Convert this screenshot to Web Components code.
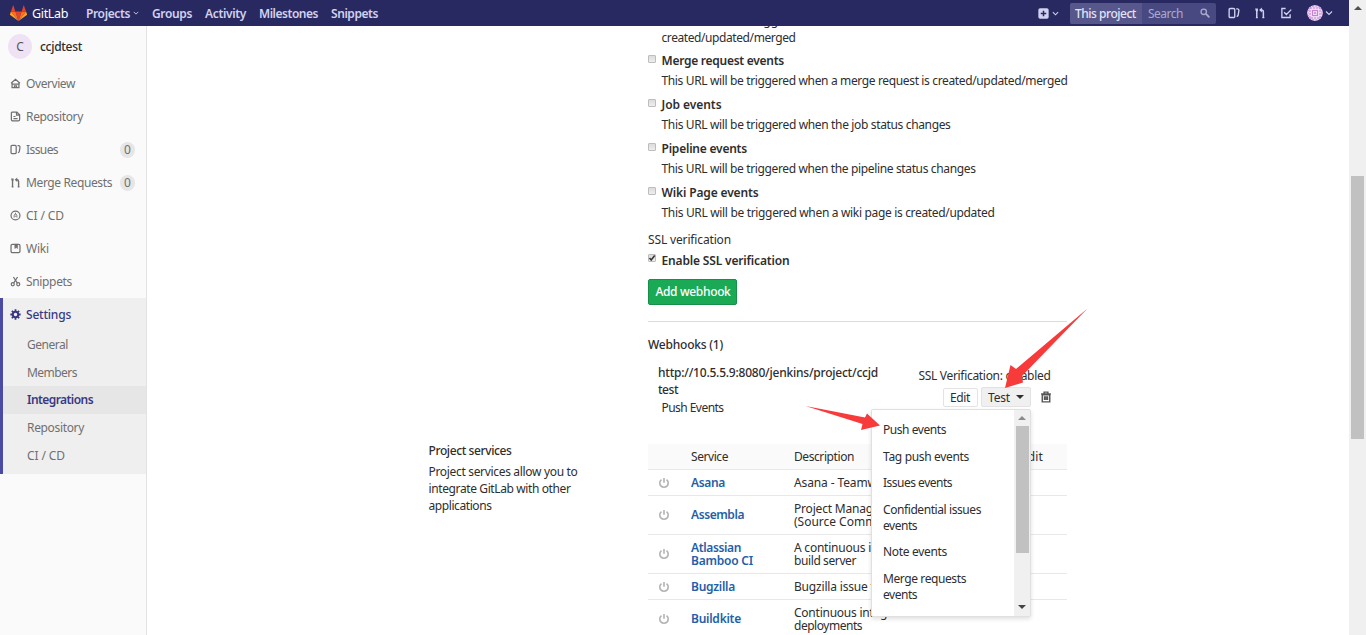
<!DOCTYPE html>
<html lang="en">
<head>
<meta charset="utf-8">
<title>Integrations · ccjdtest · GitLab</title>
<style>
html,body{margin:0;height:100%;overflow:hidden;background:#fff}
body{font:12px/17px "Noto Sans","Open Sans",sans-serif;color:#2e2e2e}
</style>
</head>
<body>
<gl-app></gl-app>
<script>
const fits=[];
function define(name,html,setup){
  customElements.define(name,class extends HTMLElement{
    constructor(){super();this.attachShadow({mode:'open'}).innerHTML=html;}
    connectedCallback(){if(setup)setup.call(this,this.shadowRoot);}
  });
}
/* Text run that is tracked to a given width */
define('fit-text',`<style>:host{display:inline-block;white-space:nowrap;vertical-align:top}</style><slot></slot>`,function(){fits.push(this)});

const ICONS={
  home:'<path d="M1.5 7.5 8 2l6.500 5.500M3 7v7h10V7M2 9h12M6.500 14v-2.500h3V14" />',
  doc:'<path d="M3 1.500h7l4 4v7a2 2 0 0 1-2 2H4a2 2 0 0 1-2-2v-10zM9.500 2v4H14M5 8h3M5 11h6"/>',
  issues:'<path d="M3 2h4.500a1.500 1.500 0 0 1 1.500 1.500v9A1.500 1.500 0 0 1 7.500 14H3a1.500 1.500 0 0 1-1.500-1.500v-9A1.500 1.500 0 0 1 3 2zM11 2.500h1.500a2 2 0 0 1 2 2.300L13.500 11a2 2 0 0 1-2 1.500"/>',
  merge:'<path d="M3.700 4v10.500M12.500 14.500V6.500a2.500 2.500 0 0 0-2.500-2.500H8.500" stroke-width="2"/><path d="M1.500 2h3.700v3.500H2.500zM10.500.8v6.400L6.800 4z" fill="currentColor" stroke="none"/><path d="M2.500 14.200h2.400M11.300 14.200h2.400"/>',
  ci:'<circle cx="8" cy="8" r="6.500"/><path d="M6 11V8a2 2 0 1 1 4 0v3M7 9h2M8 4v2" stroke-width="1.300"/>',
  wiki:'<rect x="1.500" y="2" width="13" height="12" rx="2"/><path d="M7 2v6l2-1.500L11 8V2z" fill="currentColor" stroke-width=".8"/>',
  snip:'<circle cx="4" cy="12" r="2.200"/><circle cx="12" cy="12" r="2.200"/><path d="M5 1.500 10.500 10M11 1.500 5.500 10"/>',
  gear:'<circle cx="8" cy="8" r="4" stroke-width="3"/><path d="M8 .5v3M8 12.500v3M.5 8h3M12.500 8h3M2.700 2.700l2 2M11.300 11.300l2 2M13.300 2.700l-2 2M4.700 11.300l-2 2" stroke-width="2.600"/>',
  todo:'<path d="M7.500 2H2.500v12h11V9.500M5.500 7 8.500 10 15 3.500"/>',
  search:'<circle cx="6" cy="6" r="4.300" stroke-width="2.200"/><path d="m9.500 9.500 5.500 5.500" stroke-width="3"/>',
  down:'<path d="m2 5 6 6 6-6"/>',
  plus:'<rect x=".5" y=".5" width="15" height="15" rx="2.500" fill="currentColor" stroke="none"/><path d="M8 4v8M4 8h8" stroke="#292961" stroke-width="2.200"/>',
  power:'<path d="M4.700 3.600a5.600 5.600 0 1 0 6.600 0M8 1.200V7.500"/>',
  trash:'<path d="M3 5h10v9.500H3zM1.500 4h13M5.500 4V1.500h5V4M6 7v5M8 7v5M10 7v5"/>',
  tanuki:'<g stroke="none"><path fill="#e24329" d="M8 15 10.950 6H5.050z"/><path fill="#fc6d26" d="M8 15 5.050 6H.9zM8 15l2.950-9h4.150z"/><path fill="#fca326" d="M.9 6 0 8.800c-.1.300 0 .5.200.7L8 15zM15.100 6l.9 2.800c.1.300 0 .5-.2.7L8 15z"/><path fill="#e24329" d="M.9 6h4.150L3.300.6q-.25-.5-.5 0zM15.100 6h-4.150L12.700.6q.25-.5.5 0z"/></g>'
};
define('gl-icon','<style>:host{display:inline-block;width:var(--s,12px);height:var(--s,12px);flex:none}svg{display:block;width:100%;height:100%;fill:none;stroke:currentColor;stroke-width:var(--w,1.8)}</style><svg viewBox="0 0 16 16"></svg>',function(r){r.querySelector('svg').innerHTML=ICONS[this.getAttribute('name')]});

define('gl-header',`<style>
:host{display:flex;align-items:center;height:26px;background:#292961;color:#d1d1f0;font-weight:600;box-sizing:border-box;padding-left:10px;position:relative;z-index:2}
.brand{color:#fff;font-weight:400;margin-left:5px;width:54px;font-size:12.500px}
nav{display:flex;flex:1}nav span{display:flex;align-items:center;margin-right:13px}
nav gl-icon{margin-left:3px}
.search{display:flex;align-items:center;height:21px;width:146px;background:#494982;border-radius:2px;margin:0 12px 0 11px;font-weight:400;color:#a9a9cf}
.scope{background:#57578c;height:21px;line-height:21px;width:67px;padding-left:5px;box-sizing:content-box;color:#e3e3f6;border-radius:2px 0 0 2px;font-weight:500}
.search .q{margin-left:6px;flex:1}.search gl-icon{margin-right:6px}
.tools{display:flex;align-items:center}
.av{width:16px;height:16px;border-radius:50%;flex:none}
</style>
<gl-icon name="tanuki" style="--s:17px"></gl-icon><span class="brand"><fit-text w="36">GitLab</fit-text></span>
<nav><span><fit-text w="44">Projects</fit-text><gl-icon name="down" style="--s:6px;--w:2.4"></gl-icon></span><span><fit-text w="40">Groups</fit-text></span><span><fit-text w="41">Activity</fit-text></span><span><fit-text w="59">Milestones</fit-text></span><span><fit-text w="47">Snippets</fit-text></span></nav>
<gl-icon name="plus" style="--s:11px"></gl-icon><gl-icon name="down" style="--s:7px;--w:2.4;margin-left:3px"></gl-icon>
<div class="search"><span class="scope"><fit-text w="61">This project</fit-text></span><span class="q"><fit-text w="35">Search</fit-text></span><gl-icon name="search" style="--s:10px"></gl-icon></div>
<div class="tools"><gl-icon name="issues"></gl-icon><gl-icon name="merge" style="margin-left:14px"></gl-icon><gl-icon name="todo" style="margin:0 15px 0 14px"></gl-icon>
<svg class="av" viewBox="0 0 16 16"><circle cx="8" cy="8" r="8" fill="#efd9f4"/><g fill="none" stroke="#c583d4"><rect x="5.500" y="5.500" width="5" height="5"/><rect x="3" y="3" width="10" height="10" stroke-dasharray="2 1"/><circle cx="8" cy="8" r="7" stroke-dasharray="1.500 1.500"/></g><circle cx="8" cy="8" r="1" fill="#c583d4"/></svg>
<gl-icon name="down" style="--s:8px;--w:2.2;margin:0 16px 0 2px"></gl-icon></div>`);

define('side-item',`<style>
:host{display:flex;align-items:center;height:33px;padding:0 11px 0 10px;color:#707070;box-sizing:border-box}
:host([sub]){height:28px;padding-left:24px}
:host([raised]){padding-bottom:2px}
:host([active]){color:#393982;font-weight:500}
:host([sub][active]){background:#e6e6e6;font-weight:600}
gl-icon{--s:11px;margin-right:5px}.l{flex:1}
b{font-weight:400;background:#e6e6e6;border-radius:8px;width:15px;height:16px;line-height:16px;text-align:center}
</style><gl-icon></gl-icon><span class="l"><slot></slot></span><b></b>`,function(r){
  const i=r.querySelector('gl-icon'),n=this.getAttribute('icon'),b=r.querySelector('b');
  if(n){const x=document.createElement('gl-icon');x.setAttribute('name',n);i.replaceWith(x)}else i.remove();
  const c=this.getAttribute('count');if(c)b.textContent=c;else b.remove();
});
define('gl-sidebar',`<style>
:host{display:block;width:146px;background:#fafafa;border-right:1px solid #e2e2e2;flex:none}
.p{display:flex;align-items:center;height:41px;padding-left:8px;font-weight:500;color:#2e2e2e}
.a{width:24px;height:25px;line-height:25px;border-radius:50%;background:#f0e2f5;color:#555;text-align:center;margin-right:8px;font-weight:400}
.s{background:#efefef;border-left:3px solid #4b4ba3;height:176px}
.s side-item:first-child{height:32px;padding-left:7px}
</style>
<div class="p"><span class="a">C</span><fit-text w="42">ccjdtest</fit-text></div>
<side-item icon="home"><fit-text w="49">Overview</fit-text></side-item>
<side-item icon="doc"><fit-text w="57">Repository</fit-text></side-item>
<side-item icon="issues" count="0"><fit-text w="32">Issues</fit-text></side-item>
<side-item icon="merge" count="0"><fit-text w="86">Merge Requests</fit-text></side-item>
<side-item icon="ci"><fit-text w="38">CI / CD</fit-text></side-item>
<side-item icon="wiki"><fit-text w="23">Wiki</fit-text></side-item>
<side-item icon="snip"><fit-text w="46">Snippets</fit-text></side-item>
<div class="s"><side-item icon="gear" active><fit-text w="45">Settings</fit-text></side-item>
<side-item sub><fit-text w="41">General</fit-text></side-item><side-item sub><fit-text w="50">Members</fit-text></side-item><side-item sub active raised><fit-text w="66">Integrations</fit-text></side-item><side-item sub raised><fit-text w="57">Repository</fit-text></side-item><side-item sub raised><fit-text w="38">CI / CD</fit-text></side-item></div>`);

define('check-row',`<style>
:host{display:grid;grid-template-columns:13.500px 1fr;row-gap:3px;margin-bottom:7px}
i{width:6px;height:6px;border:1px solid #bdbdbd;background:linear-gradient(#dcdcdc,#eee);border-radius:1px;margin-top:3px}
svg{display:none;width:8px;height:8px;margin:-1px}
:host([checked]) svg{display:block}:host([checked]) i{margin-top:2px}
.t{font-weight:600;height:17px}.d{grid-column:2;height:17px}
:host([checked]) .d{display:none}
</style><i><svg viewBox="0 0 8 8"><path d="M1.500 4 3.200 6 6.700 1.500" fill="none" stroke="#333" stroke-width="1.500"/></svg></i><span class="t"><slot name="t"></slot></span><span class="d"><slot></slot></span>`);

define('service-row',`<style>
:host{display:grid;grid-template-columns:43px 103px 1fr 30px;align-items:center;height:38px;border-bottom:1px solid #e8e8e8;line-height:13px}
:host([short]){height:25px}
:host([head]){background:#fafafa;height:25px}
gl-icon{--s:12px;--w:2.2;color:#b5b5b5;margin-left:10px}
.n{color:#1f60a8;font-weight:600}:host([single]) .n{padding-bottom:2px}:host([head]) .n{color:inherit;font-weight:400}:host([head]) gl-icon{visibility:hidden}
</style><gl-icon name="power"></gl-icon><span class="n"><slot name="n"></slot></span><span><slot></slot></span><span><slot name="e"></slot></span>`);

define('gl-menu',`<style>
:host{display:flex;position:absolute;left:223px;top:73px;width:160px;height:208px;background:#fff;border:1px solid #e0e0e0;box-sizing:border-box;border-radius:2px;box-shadow:0 2px 4px rgba(0,0,0,.13);line-height:16px;z-index:3}
ul{list-style:none;margin:0;padding:12px 0 0 11px;flex:1}li{margin-bottom:10.600px}
.b{width:16px;background:#f0f0f0;display:flex;flex-direction:column;align-items:center}
.b i{width:13px;height:127px;background:#c1c1c1;margin:6px 0 52px}
.u,.d{width:0;border:4px solid transparent;border-top:0;border-bottom:4px solid #8b8b8b;margin-top:6px}
.d{border-bottom:0;border-top:4px solid #444;margin:0}
</style><ul><li><fit-text w="63">Push events</fit-text></li><li><fit-text w="86">Tag push events</fit-text></li><li><fit-text w="69">Issues events</fit-text></li><li><fit-text w="98">Confidential issues</fit-text><br><fit-text w="34">events</fit-text></li><li><fit-text w="64">Note events</fit-text></li><li><fit-text w="83">Merge requests</fit-text><br><fit-text w="34">events</fit-text></li></ul><div class="b"><span class="u"></span><i></i><span class="d"></span></div>`);

define('webhook-panel',`<style>
:host{display:block;position:relative;height:108px}
.h{height:17px;font-weight:500}.r{display:flex;justify-content:space-between;padding:11px 16px 0 10px}
.url{font-weight:500}.ev{margin-left:3.500px;height:17px;margin-top:1px}
.side{padding-top:3px;width:132.500px}
.btns{display:flex;align-items:center;margin:3px 0 0 24.500px}
.btn{border:1px solid #e3e3e3;border-radius:2px;height:17px;line-height:17px;background:#fff;padding:0 6px;width:21px;flex:none}
.btn.t{background:#f0f0f0;border-color:#e2e2e2;margin-left:3px;height:18px;width:36px;display:flex;align-items:center;justify-content:space-between}
.c{border:4px solid transparent;border-top:4px solid #2e2e2e;border-bottom:0}
gl-icon{--s:12px;margin-left:9px;color:#555;--w:1.9}
</style><div class="h"><fit-text w="75">Webhooks (1)</fit-text></div>
<div class="r"><div><div class="url"><fit-text w="220">http://10.5.5.9:8080/jenkins/project/ccjd</fit-text><br><fit-text w="20">test</fit-text></div><div class="ev"><fit-text w="62">Push Events</fit-text></div></div>
<div class="side"><fit-text w="132">SSL Verification: disabled</fit-text><div class="btns"><span class="btn"><fit-text w="20">Edit</fit-text></span><span class="btn t"><fit-text w="22">Test</fit-text><span class="c"></span></span><gl-icon name="trash"></gl-icon></div></div></div>
<gl-menu></gl-menu>`);

define('gl-content',`<style>
:host{display:grid;grid-template-columns:219.500px 419px;flex:1;padding-left:281.500px;margin-top:-14px;align-content:start}
.left{padding-top:430px}.left b{display:block;font-weight:500;margin-bottom:4px}
.pre{height:40px}
.ssl{height:17px;margin:10px 0 4px}
.add{box-sizing:border-box;width:89px;height:26px;line-height:24px;border:1px solid #168f48;border-radius:2px;background:#1aaa55;color:#fff;padding-left:6.500px;font-weight:500;margin-top:10px}
hr{border:0;border-top:1px solid #dcdcdc;margin:16px 0 14px}
</style>
<div class="left"><b><fit-text w="83">Project services</fit-text></b><fit-text w="149">Project services allow you to</fit-text><br><fit-text w="142">integrate GitLab with other</fit-text><br><fit-text w="63">applications</fit-text></div>
<div><div class="pre"><span style="display:block;padding-left:13.500px"><fit-text w="236">This URL will be triggered when an issue is</fit-text><br><fit-text w="134">created/updated/merged</fit-text></span></div>
<check-row><fit-text slot="t" w="122.500">Merge request events</fit-text><fit-text w="406">This URL will be triggered when a merge request is created/updated/merged</fit-text></check-row>
<check-row><fit-text slot="t" w="60">Job events</fit-text><fit-text w="289">This URL will be triggered when the job status changes</fit-text></check-row>
<check-row><fit-text slot="t" w="85.500">Pipeline events</fit-text><fit-text w="314">This URL will be triggered when the pipeline status changes</fit-text></check-row>
<check-row><fit-text slot="t" w="97">Wiki Page events</fit-text><fit-text w="333">This URL will be triggered when a wiki page is created/updated</fit-text></check-row>
<div class="ssl"><fit-text w="83">SSL verification</fit-text></div>
<check-row checked style="margin-bottom:0"><fit-text slot="t" w="128">Enable SSL verification</fit-text></check-row>
<div class="add"><fit-text w="75">Add webhook</fit-text></div><hr>
<webhook-panel></webhook-panel>
<service-row head><fit-text slot="n" w="37">Service</fit-text><fit-text w="60">Description</fit-text><fit-text slot="e" w="49" style="margin-left:-43px">Last edit</fit-text></service-row>
<service-row short><fit-text slot="n" w="34">Asana</fit-text><fit-text w="178">Asana - Teamwork without tasks</fit-text></service-row>
<service-row single><fit-text slot="n" w="53">Assembla</fit-text><fit-text w="166">Project Management Software</fit-text><br><fit-text w="153">(Source Commits Endpoint)</fit-text></service-row>
<service-row><span slot="n"><fit-text w="50">Atlassian</fit-text><br><fit-text w="62">Bamboo CI</fit-text></span><fit-text w="158">A continuous integration and</fit-text><br><fit-text w="62">build server</fit-text></service-row>
<service-row short><fit-text slot="n" w="44">Bugzilla</fit-text><fit-text w="115">Bugzilla issue tracker</fit-text></service-row>
<service-row single><fit-text slot="n" w="50">Buildkite</fit-text><fit-text w="149">Continuous integration and</fit-text><br><fit-text w="68">deployments</fit-text></service-row>
</div>`);

define('page-scrollbar',`<style>
:host{display:flex;flex-direction:column;align-items:center;width:17px;background:#f0f0f0;flex:none}
.u{width:0;border:4px solid transparent;border-top:0;border-bottom:4px solid #505050;margin:6px 0 166px}
.t{width:13px;height:263px;background:#c1c1c1}
</style><span class="u"></span><span class="t"></span>`);
define('red-arrows',`<style>:host{position:absolute;inset:0;z-index:9;pointer-events:none}svg{display:block}</style>
<svg width="1366" height="635" fill="#f73a3a"><path d="M1087.500 308.500 1022 376 1023 382.500 1005 388 1010.500 365 1016 369z"/><path d="M805.500 406 865 417.500 867 413.500 880 425.500 861 430 862.500 424z"/></svg>`);
define('gl-app',`<style>
:host{display:flex;height:635px;width:1366px;overflow:hidden;position:relative}
.w{flex:1;display:flex;flex-direction:column;min-width:0}.m{display:flex;flex:1;min-height:0}
</style><div class="w"><gl-header></gl-header><div class="m"><gl-sidebar></gl-sidebar><gl-content></gl-content></div></div><page-scrollbar></page-scrollbar><red-arrows></red-arrows>`);

for(const e of fits){
  const n=e.textContent.length,w=e.getBoundingClientRect().width;
  e.style.letterSpacing=((+e.getAttribute('w')-w)/n).toFixed(3)+'px';
}
</script>
</body>
</html>
